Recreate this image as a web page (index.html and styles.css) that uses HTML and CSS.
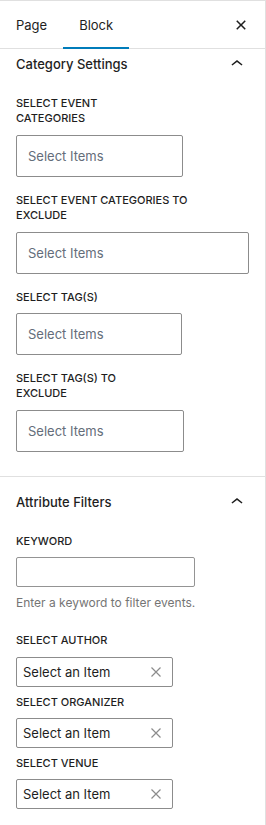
FILE: index.html
```html
<!DOCTYPE html>
<html lang="en">
<head>
    <meta charset="UTF-8">
    <meta name="viewport" content="width=device-width, initial-scale=1.0">
    <title>Block Settings</title>
    <link rel="stylesheet" href="styles.css">
</head>
<body>
    <div class="sidebar">
        <div class="sidebar-header">
            <div class="tabs">
                <button class="tab">Page</button>
                <button class="tab is-active">Block</button>
            </div>
            <button class="close-btn" aria-label="Close">
                <svg width="24" height="24" viewBox="0 0 24 24"><path d="M12 13.06l3.712 3.713 1.061-1.06L13.061 12l3.712-3.712-1.06-1.06L12 10.938 8.288 7.227l-1.061 1.06L10.939 12l-3.712 3.712 1.06 1.061L12 13.061z"/></svg>
            </button>
        </div>

        <div class="panel panel-first">
            <div class="panel-title">
                <span>Category Settings</span>
                <svg width="24" height="24" viewBox="0 0 24 24"><path d="M6.5 12.4L12 8l5.5 4.4-.9 1.2L12 10l-4.6 3.6-1-1.2z"/></svg>
            </div>

            <div class="field">
                <label class="field-label">Select Event<br>Categories</label>
                <div class="multi-select w-cat">Select Items</div>
            </div>
            <div class="field">
                <label class="field-label">Select Event Categories to<br>Exclude</label>
                <div class="multi-select w-full">Select Items</div>
            </div>
            <div class="field">
                <label class="field-label">Select Tag(s)</label>
                <div class="multi-select w-tag">Select Items</div>
            </div>
            <div class="field">
                <label class="field-label">Select Tag(s) to<br>Exclude</label>
                <div class="multi-select w-tag-ex">Select Items</div>
            </div>
        </div>

        <div class="panel">
            <div class="panel-title">
                <span>Attribute Filters</span>
                <svg width="24" height="24" viewBox="0 0 24 24"><path d="M6.5 12.4L12 8l5.5 4.4-.9 1.2L12 10l-4.6 3.6-1-1.2z"/></svg>
            </div>

            <div class="field field-help">
                <label class="field-label" for="keyword">Keyword</label>
                <input class="text-input" type="text" id="keyword">
                <p class="help-text">Enter a keyword to filter events.</p>
            </div>
            <div class="field field-compact">
                <label class="field-label">Select Author</label>
                <div class="single-select">
                    <span>Select an Item</span>
                    <svg width="12" height="12" viewBox="0 0 12 12"><path d="M1.5 1.5l9 9M10.5 1.5l-9 9"/></svg>
                </div>
            </div>
            <div class="field field-compact">
                <label class="field-label">Select Organizer</label>
                <div class="single-select">
                    <span>Select an Item</span>
                    <svg width="12" height="12" viewBox="0 0 12 12"><path d="M1.5 1.5l9 9M10.5 1.5l-9 9"/></svg>
                </div>
            </div>
            <div class="field field-compact">
                <label class="field-label">Select Venue</label>
                <div class="single-select">
                    <span>Select an Item</span>
                    <svg width="12" height="12" viewBox="0 0 12 12"><path d="M1.5 1.5l9 9M10.5 1.5l-9 9"/></svg>
                </div>
            </div>
        </div>
    </div>
</body>
</html>
```

FILE: styles.css
```css
* {
    box-sizing: border-box;
}

body {
    margin: 0;
    font-family: Inter, "Noto Sans", sans-serif;
    color: #1e1e1e;
    background: #fff;
}

.sidebar {
    width: 266px;
    min-height: 825px;
    border-top: 1px solid #e0e0e0;
    border-right: 1px solid #e0e0e0;
}

.sidebar-header {
    display: flex;
    justify-content: space-between;
    align-items: center;
    height: 48px;
    border-bottom: 1px solid #e0e0e0;
}

.tabs {
    display: flex;
    height: 100%;
}

.tab {
    position: relative;
    height: 100%;
    padding: 0 16px;
    border: none;
    background: none;
    font-family: inherit;
    font-size: 13px;
    color: #1e1e1e;
}

.tab.is-active::after {
    content: "";
    position: absolute;
    left: 0;
    right: 0;
    bottom: -1px;
    height: 2px;
    background: #007cba;
}

.close-btn {
    display: flex;
    width: 32px;
    height: 32px;
    margin-right: 8px;
    padding: 4px;
    border: none;
    background: none;
}

.close-btn svg, .panel-title svg {
    fill: #1e1e1e;
}

.panel {
    padding: 0 16px 24px;
    border-bottom: 1px solid #e0e0e0;
}

.panel-title {
    display: flex;
    justify-content: space-between;
    align-items: center;
    padding: 15px 0 22px;
    font-size: 13px;
    font-weight: 500;
    line-height: 20px;
}

.panel-title svg {
    margin: -2px 0;
}

.panel-first .panel-title {
    padding-top: 5px;
}

.field {
    margin-bottom: 16px;
}

.field:last-child {
    margin-bottom: 0;
}

.field-label {
    display: block;
    margin-bottom: 8px;
    font-size: 11px;
    font-weight: 500;
    line-height: 1.4;
    text-transform: uppercase;
}

.multi-select {
    display: flex;
    align-items: center;
    height: 42px;
    padding: 0 11px;
    border: 1px solid #8c8c8c;
    border-radius: 2px;
    font-size: 13px;
    color: #646d7a;
}

.w-cat { width: 167px; }
.w-full { width: 233px; }
.w-tag { width: 166px; }
.w-tag-ex { width: 168px; }

.text-input {
    display: block;
    width: 179px;
    height: 30px;
    margin: 0;
    border: 1px solid #949494;
    border-radius: 2px;
}

.help-text {
    margin: 8px 0 0;
    font-size: 12px;
    line-height: 16px;
    color: #757575;
}

.field-help {
    margin-bottom: 22px;
}

.field-compact {
    margin-bottom: 8px;
}

.single-select {
    display: flex;
    justify-content: space-between;
    align-items: center;
    width: 157px;
    height: 30px;
    padding: 0 10px 0 6px;
    border: 1px solid #8c8c8c;
    border-radius: 2px;
    font-size: 13px;
    color: #1e1e1e;
}

.single-select svg {
    stroke: #8c8c8c;
    stroke-width: 1.2;
}
```
